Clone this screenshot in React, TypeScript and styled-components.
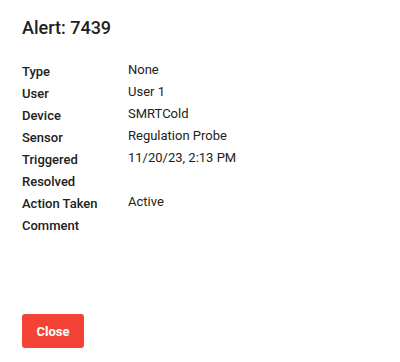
import React from "react";
import styled, { createGlobalStyle } from "styled-components";

const Global = createGlobalStyle`
  html, body { margin: 0; padding: 0; background: #fff; }
  body { font-family: Roboto, "Liberation Sans", Arial, sans-serif; color: #212121; }
`;

const Dialog = styled.div`
  width: 400px;
  height: 362px;
  box-sizing: border-box;
  padding: 17px 22px 14px;
  display: flex;
  flex-direction: column;
`;

const Title = styled.h2`
  margin: 0;
  font-size: 18px;
  line-height: 22px;
  font-weight: 500;
  color: #212121;
`;

const Details = styled.div`
  margin-top: 22px;
  display: grid;
  grid-template-columns: 106px 1fr;
  grid-auto-rows: 22px;
  align-items: start;
`;

const Label = styled.div`
  font-size: 13px;
  line-height: 22px;
  font-weight: 500;
  color: #212121;
`;

const Value = styled.div`
  font-size: 13px;
  line-height: 18px;
  font-weight: 400;
  color: #222;
`;

const Footer = styled.div`
  margin-top: auto;
  display: flex;
`;

const CloseButton = styled.button`
  width: 62px;
  height: 34px;
  border: none;
  border-radius: 3px;
  background: #f44336;
  color: #fff;
  font-family: Roboto, "Liberation Sans", Arial, sans-serif;
  font-size: 13px;
  font-weight: 700;
  cursor: pointer;
`;

const rows: [string, string][] = [
  ["Type", "None"],
  ["User", "User 1"],
  ["Device", "SMRTCold"],
  ["Sensor", "Regulation Probe"],
  ["Triggered", "11/20/23, 2:13 PM"],
  ["Resolved", ""],
  ["Action Taken", "Active"],
  ["Comment", ""],
];

export default function App() {
  return (
    <>
      <Global />
      <Dialog>
        <Title>Alert: 7439</Title>
        <Details>
          {rows.map(([k, v]) => (
            <React.Fragment key={k}>
              <Label>{k}</Label>
              <Value>{v}</Value>
            </React.Fragment>
          ))}
        </Details>
        <Footer>
          <CloseButton>Close</CloseButton>
        </Footer>
      </Dialog>
    </>
  );
}
